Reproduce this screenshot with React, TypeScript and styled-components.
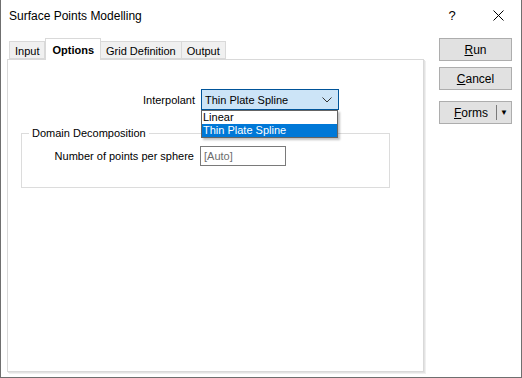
import * as React from 'react';
import styled, { createGlobalStyle } from 'styled-components';

const GlobalStyle = createGlobalStyle`
  html, body {
    margin: 0;
    padding: 0;
    background: #ffffff;
  }
  body {
    font-family: 'Liberation Sans', Arial, sans-serif;
    font-size: 11px;
    color: #000;
  }
`;

const Window = styled.div`
  display: flex;
  flex-direction: column;
  box-sizing: border-box;
  width: 522px;
  height: 378px;
  background-color: #fff;
  border: 1px solid #6f6f6f;
  border-top: none;
`;

const TitleBar = styled.div`
  display: flex;
  align-items: center;
  height: 30px;
  padding-left: 8px;
`;

const Title = styled.span`
  flex: 1;
  font-size: 12px;
  padding-top: 2px;
`;

const TitleButton = styled.span`
  display: flex;
  justify-content: center;
  align-items: center;
  width: 46px;
  height: 30px;
  font-size: 13px;
`;

const Body = styled.div`
  display: flex;
  flex: 1;
  padding: 8px 0 0 6px;
`;

const MainColumn = styled.div`
  display: flex;
  flex-direction: column;
  width: 419px;
`;

const TabStrip = styled.div`
  display: flex;
  align-items: flex-end;
  height: 21px;
  padding-left: 2px;
  position: relative;
  z-index: 1;
`;

//탭 (선택된 탭은 흰색 + 굵게, 위로 올라옴)
const Tab = styled.div<{ $active?: boolean; $first?: boolean }>`
  display: flex;
  align-items: center;
  box-sizing: border-box;
  height: ${props => (props.$active ? '22px' : '18px')};
  margin-bottom: ${props => (props.$active ? '-1px' : '0')};
  padding: ${props => (props.$active ? '0 6px' : '1px 5px 0')};
  background-color: ${props => (props.$active ? '#fff' : '#f0f0f0')};
  border: 1px solid #d9d9d9;
  border-bottom: ${props => (props.$active ? 'none' : '1px solid #d9d9d9')};
  border-left: ${props => (props.$first || props.$active ? '1px solid #d9d9d9' : 'none')};
  font-weight: ${props => (props.$active ? 700 : 400)};
`;

const Panel = styled.div`
  box-sizing: border-box;
  height: 313px;
  width: 417px;
  border: 1px solid #d9d9d9;
  box-shadow: 1px 1px 0 #e3e3e3, 2px 2px 0 #f0f0f0;
  padding-top: 29px;
`;

const FieldRow = styled.div<{ $labelWidth: number }>`
  display: flex;
  align-items: center;
  gap: 6px;
  & > label {
    width: ${props => props.$labelWidth}px;
    text-align: right;
  }
`;

const SelectWrap = styled.div`
  position: relative;
`;

const SelectBox = styled.div`
  display: flex;
  align-items: center;
  justify-content: space-between;
  box-sizing: border-box;
  width: 138px;
  height: 21px;
  padding: 0 6px 0 3px;
  background-color: #cce4f7;
  border: 1px solid #005499;
`;

const DropList = styled.div`
  position: absolute;
  top: 21px;
  left: 0;
  box-sizing: border-box;
  width: 137px;
  background-color: #fff;
  border: 1px solid #646464;
  box-shadow: 2px 2px 2px rgba(0, 0, 0, 0.25);
  z-index: 5;
`;

const DropItem = styled.div<{ $selected?: boolean }>`
  height: 13px;
  line-height: 13px;
  padding-left: 1px;
  background-color: ${props => (props.$selected ? '#0078d7' : 'transparent')};
  color: ${props => (props.$selected ? '#fff' : '#000')};
`;

const GroupBox = styled.fieldset`
  box-sizing: border-box;
  width: 369px;
  height: 61px;
  margin: 17px 0 0 13px;
  padding: 7px 0 0 0;
  border: 1px solid #dcdcdc;
  & > legend {
    margin-left: 7px;
    padding: 0 3px;
  }
`;

const TextInput = styled.div`
  display: flex;
  align-items: center;
  box-sizing: border-box;
  width: 86px;
  height: 20px;
  padding-left: 3px;
  border: 1px solid #7a7a7a;
  color: #6d6d6d;
`;

const SideColumn = styled.div`
  display: flex;
  flex-direction: column;
  margin-left: 13px;
  width: 73px;
`;

const Button = styled.div<{ $gapAfter?: number }>`
  display: flex;
  align-items: center;
  justify-content: center;
  box-sizing: border-box;
  height: 23px;
  margin-bottom: ${props => props.$gapAfter ?? 6}px;
  background-color: #e1e1e1;
  border: 1px solid #adadad;
  font-size: 12px;
`;

const SplitButton = styled(Button)`
  justify-content: flex-start;
  padding: 0;
`;

const SplitLabel = styled.span`
  flex: 1;
  text-align: center;
  padding-left: 6px;
`;

const SplitArrow = styled.span`
  display: flex;
  align-items: center;
  justify-content: center;
  width: 14px;
  height: 15px;
  border-left: 1px solid #7a7a7a;
  font-size: 8px;
`;

function Chevron() {
  return (
    <svg width="10" height="6" viewBox="0 0 10 6">
      <path d="M0.5 0.5 L5 5 L9.5 0.5" fill="none" stroke="#333" strokeWidth="1" />
    </svg>
  );
}

function CloseIcon() {
  return (
    <svg width="11" height="11" viewBox="0 0 11 11">
      <path d="M0.5 0.5 L10.5 10.5 M10.5 0.5 L0.5 10.5" stroke="#000" strokeWidth="1" />
    </svg>
  );
}

export default function App() {
  const tabs = ['Input', 'Options', 'Grid Definition', 'Output'];
  const activeTab = 1;

  return (
    <>
      <GlobalStyle />
      <Window>
        <TitleBar>
          <Title>Surface Points Modelling</Title>
          <TitleButton>?</TitleButton>
          <TitleButton>
            <CloseIcon />
          </TitleButton>
        </TitleBar>
        <Body>
          <MainColumn>
            <TabStrip>
              {tabs.map((t, i) => (
                <Tab key={t} $active={i === activeTab} $first={i === 0}>
                  {t}
                </Tab>
              ))}
            </TabStrip>
            <Panel>
              <FieldRow $labelWidth={187}>
                <label>Interpolant</label>
                <SelectWrap>
                  <SelectBox>
                    <span>Thin Plate Spline</span>
                    <Chevron />
                  </SelectBox>
                  <DropList>
                    <DropItem>Linear</DropItem>
                    <DropItem $selected>Thin Plate Spline</DropItem>
                  </DropList>
                </SelectWrap>
              </FieldRow>
              <GroupBox>
                <legend>Domain Decomposition</legend>
                <FieldRow $labelWidth={172}>
                  <label>Number of points per sphere</label>
                  <TextInput>[Auto]</TextInput>
                </FieldRow>
              </GroupBox>
            </Panel>
          </MainColumn>
          <SideColumn>
            <Button>
              <span>
                <u>R</u>un
              </span>
            </Button>
            <Button $gapAfter={11}>
              <span>
                <u>C</u>ancel
              </span>
            </Button>
            <SplitButton>
              <SplitLabel>
                <u>F</u>orms
              </SplitLabel>
              <SplitArrow>▼</SplitArrow>
            </SplitButton>
          </SideColumn>
        </Body>
      </Window>
    </>
  );
}
